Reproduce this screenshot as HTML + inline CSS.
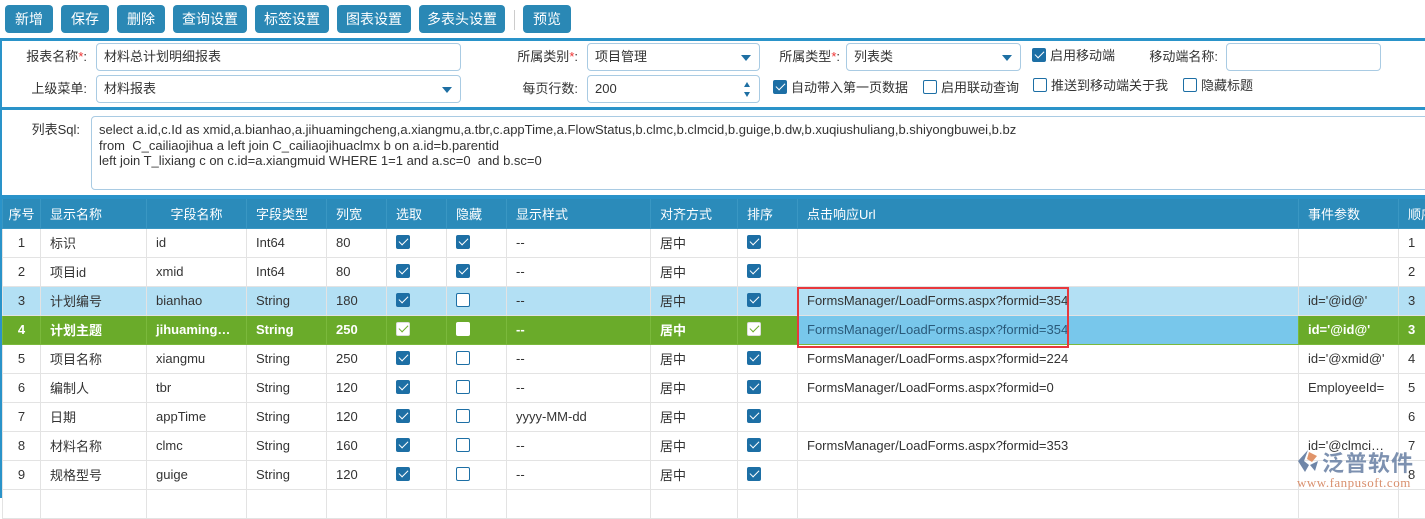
<!DOCTYPE html>
<html><head><meta charset="utf-8"><style>
*{box-sizing:border-box;margin:0;padding:0}
body{width:1425px;height:496px;overflow:hidden;background:#fff;font-family:"Liberation Sans","Noto Sans CJK SC",sans-serif;font-size:13px;color:#333;position:relative}
.a{position:absolute}
.btn{position:absolute;top:5px;height:28px;background:#2a88b5;color:#fff;border-radius:4px;font-size:14px;line-height:28px;text-align:center}
.lbl{position:absolute;text-align:right;font-size:13px;color:#333;line-height:28px}
.inp{position:absolute;height:28px;border:1px solid #a9cbe3;border-radius:4px;background:#fff;padding-left:7px;line-height:26px;font-size:13px;color:#333}
.arr{position:absolute;right:8px;top:11px;width:0;height:0;border-left:5px solid transparent;border-right:5px solid transparent;border-top:6px solid #1e6fa3}
.cb{display:inline-block;width:14px;height:14px;border:1.5px solid #1d6fa5;border-radius:2px;background:#fff;vertical-align:-2px;position:relative}
.cb.on{background:#1d6fa5}
.cb.on:after{content:"";position:absolute;left:3.5px;top:0px;width:4px;height:8px;border:solid #fff;border-width:0 1.5px 1.5px 0;transform:rotate(45deg)}
.cb.w{background:#fff;border-color:#ddd}
.cb.w:after{content:"";position:absolute;left:3.5px;top:0px;width:4px;height:8px;border:solid #6aab2a;border-width:0 1.2px 1.2px 0;transform:rotate(45deg)}
.chk{position:absolute;line-height:28px;font-size:13px;color:#333}
.chk .cb{margin-right:4px}
table{position:absolute;left:2px;top:199px;border-collapse:collapse;table-layout:fixed;width:1440px}
td,th{height:29px;border:1px solid #e3e3e3;padding:0 9px;white-space:nowrap;overflow:hidden;text-overflow:ellipsis;font-size:13px;text-align:left;font-weight:normal}
th{background:#2b8bba;color:#fff;border-color:#3a97c3;border-top:none}
td.c,th.c{text-align:center;padding:0}
tr.s td{background:#b3e0f4}
tr.g td{background:#6aab2a;color:#fff;font-weight:bold;border-color:#7bb93c}
tr.g td.u{background:#78c7eb;color:#2a5a7a;font-weight:normal}
</style></head><body>
<div class="btn" style="left:5px;width:48px">新增</div>
<div class="btn" style="left:61px;width:48px">保存</div>
<div class="btn" style="left:117px;width:48px">删除</div>
<div class="btn" style="left:173px;width:74px">查询设置</div>
<div class="btn" style="left:255px;width:74px">标签设置</div>
<div class="btn" style="left:337px;width:74px">图表设置</div>
<div class="btn" style="left:419px;width:86px">多表头设置</div>
<div class="a" style="left:514px;top:10px;width:1px;height:20px;background:#ccc"></div>
<div class="btn" style="left:523px;width:48px">预览</div>

<div class="a" style="left:0;top:38px;width:1425px;height:3px;background:#2a93c9"></div>
<div class="a" style="left:0;top:38px;width:2px;height:460px;background:#2a93c9"></div>
<div class="a" style="left:0;top:107px;width:1425px;height:3px;background:#2a93c9"></div>
<div class="a" style="left:0;top:195px;width:1425px;height:4px;background:#2a93c9"></div>

<div class="lbl" style="left:0;top:43px;width:87px">报表名称<span style="color:#e33">*</span>:</div>
<div class="inp" style="left:96px;top:43px;width:365px">材料总计划明细报表</div>
<div class="lbl" style="left:0;top:75px;width:87px">上级菜单:</div>
<div class="inp" style="left:96px;top:75px;width:365px">材料报表<span class="arr"></span></div>

<div class="lbl" style="left:480px;top:43px;width:98px">所属类别<span style="color:#e33">*</span>:</div>
<div class="inp" style="left:587px;top:43px;width:173px">项目管理<span class="arr"></span></div>
<div class="lbl" style="left:480px;top:75px;width:98px">每页行数:</div>
<div class="inp" style="left:587px;top:75px;width:173px">200<span class="a" style="right:9px;top:6px;border-left:3px solid transparent;border-right:3px solid transparent;border-bottom:5px solid #1e6fa3"></span><span class="a" style="right:9px;top:16px;border-left:3px solid transparent;border-right:3px solid transparent;border-top:5px solid #1e6fa3"></span></div>

<div class="lbl" style="left:740px;top:43px;width:100px">所属类型<span style="color:#e33">*</span>:</div>
<div class="inp" style="left:846px;top:43px;width:175px">列表类<span class="arr"></span></div>
<div class="chk" style="left:1032px;top:42px"><span class="cb on"></span>启用移动端</div>
<div class="lbl" style="left:1120px;top:43px;width:98px">移动端名称:</div>
<div class="inp" style="left:1226px;top:43px;width:155px"></div>

<div class="chk" style="left:773px;top:74px"><span class="cb on"></span>自动带入第一页数据</div>
<div class="chk" style="left:923px;top:74px"><span class="cb"></span>启用联动查询</div>
<div class="chk" style="left:1033px;top:72px"><span class="cb"></span>推送到移动端关于我</div>
<div class="chk" style="left:1183px;top:72px"><span class="cb"></span>隐藏标题</div>

<div class="lbl" style="left:0;top:116px;width:80px">列表Sql:</div>
<div class="inp" style="left:91px;top:116px;width:1345px;height:74px;line-height:15.5px;padding:5px 7px;font-size:13px">select a.id,c.Id as xmid,a.bianhao,a.jihuamingcheng,a.xiangmu,a.tbr,c.appTime,a.FlowStatus,b.clmc,b.clmcid,b.guige,b.dw,b.xuqiushuliang,b.shiyongbuwei,b.bz<br>from&nbsp; C_cailiaojihua a left join C_cailiaojihuaclmx b on a.id=b.parentid<br>left join T_lixiang c on c.id=a.xiangmuid WHERE 1=1 and a.sc=0&nbsp; and b.sc=0</div>

<table>
<colgroup><col style="width:38px"><col style="width:106px"><col style="width:100px"><col style="width:80px"><col style="width:60px"><col style="width:60px"><col style="width:60px"><col style="width:144px"><col style="width:87px"><col style="width:60px"><col style="width:501px"><col style="width:100px"><col style="width:44px"></colgroup>
<tr><th class="c">序号</th><th>显示名称</th><th style="text-align:center">字段名称</th><th>字段类型</th><th>列宽</th><th>选取</th><th>隐藏</th><th>显示样式</th><th>对齐方式</th><th>排序</th><th>点击响应Url</th><th>事件参数</th><th style="text-overflow:clip">顺序</th></tr>
<tr><td class="c">1</td><td>标识</td><td>id</td><td>Int64</td><td>80</td><td><span class="cb on"></span></td><td><span class="cb on"></span></td><td>--</td><td>居中</td><td><span class="cb on"></span></td><td></td><td></td><td>1</td></tr>
<tr><td class="c">2</td><td>项目id</td><td>xmid</td><td>Int64</td><td>80</td><td><span class="cb on"></span></td><td><span class="cb on"></span></td><td>--</td><td>居中</td><td><span class="cb on"></span></td><td></td><td></td><td>2</td></tr>
<tr class="s"><td class="c">3</td><td>计划编号</td><td>bianhao</td><td>String</td><td>180</td><td><span class="cb on"></span></td><td><span class="cb"></span></td><td>--</td><td>居中</td><td><span class="cb on"></span></td><td>FormsManager/LoadForms.aspx?formid=354</td><td>id='@id@'</td><td>3</td></tr>
<tr class="g"><td class="c">4</td><td>计划主题</td><td>jihuamingcheng</td><td>String</td><td>250</td><td><span class="cb w"></span></td><td><span class="cb" style="border-color:#fff"></span></td><td>--</td><td>居中</td><td><span class="cb w"></span></td><td class="u">FormsManager/LoadForms.aspx?formid=354</td><td>id='@id@'</td><td>3</td></tr>
<tr><td class="c">5</td><td>项目名称</td><td>xiangmu</td><td>String</td><td>250</td><td><span class="cb on"></span></td><td><span class="cb"></span></td><td>--</td><td>居中</td><td><span class="cb on"></span></td><td>FormsManager/LoadForms.aspx?formid=224</td><td>id='@xmid@'</td><td>4</td></tr>
<tr><td class="c">6</td><td>编制人</td><td>tbr</td><td>String</td><td>120</td><td><span class="cb on"></span></td><td><span class="cb"></span></td><td>--</td><td>居中</td><td><span class="cb on"></span></td><td>FormsManager/LoadForms.aspx?formid=0</td><td>EmployeeId=</td><td>5</td></tr>
<tr><td class="c">7</td><td>日期</td><td>appTime</td><td>String</td><td>120</td><td><span class="cb on"></span></td><td><span class="cb"></span></td><td>yyyy-MM-dd</td><td>居中</td><td><span class="cb on"></span></td><td></td><td></td><td>6</td></tr>
<tr><td class="c">8</td><td>材料名称</td><td>clmc</td><td>String</td><td>160</td><td><span class="cb on"></span></td><td><span class="cb"></span></td><td>--</td><td>居中</td><td><span class="cb on"></span></td><td>FormsManager/LoadForms.aspx?formid=353</td><td>id='@clmcid@'</td><td>7</td></tr>
<tr><td class="c">9</td><td>规格型号</td><td>guige</td><td>String</td><td>120</td><td><span class="cb on"></span></td><td><span class="cb"></span></td><td>--</td><td>居中</td><td><span class="cb on"></span></td><td></td><td></td><td>8</td></tr>
<tr><td class="c"></td><td></td><td></td><td></td><td></td><td></td><td></td><td></td><td></td><td></td><td></td><td></td><td></td></tr>
</table>
<div class="a" style="left:797px;top:287px;width:272px;height:61px;border:2px solid #e8383d"></div>

<svg class="a" style="left:1295px;top:448px" width="26" height="26" viewBox="0 0 26 26"><path d="M13 2 L3 13 L10 24 L14 17 L9 13 Z" fill="#6f86a8"/><path d="M14 4 L22 8 L17 14 L12 11 Z" fill="#e0946a"/><path d="M15 17 L23 13 L20 23 Z" fill="#6f86a8"/></svg>
<div class="a" style="left:1322px;top:446px;font-size:22px;font-weight:bold;color:#6f86a8;letter-spacing:1px;opacity:.9">泛普软件</div>
<div class="a" style="left:1297px;top:475px;font-family:'Liberation Serif',serif;font-size:13px;color:#d9906e;letter-spacing:.5px">www.fanpusoft.com</div>
</body></html>
